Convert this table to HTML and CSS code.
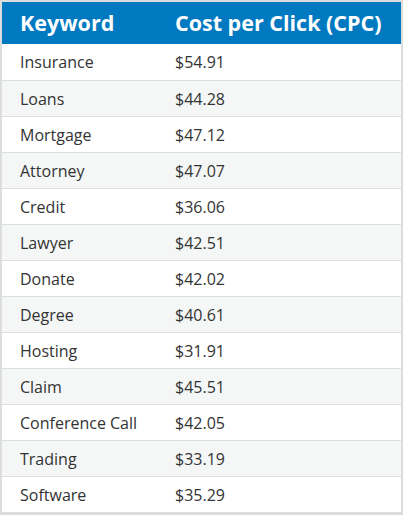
FILE: index.html
```html
<!DOCTYPE html>
<html>
<head>
<meta charset="utf-8">
<link rel="stylesheet" href="styles.css">
</head>
<body>
<table class="cpc">
  <thead>
    <tr><th class="kw">Keyword</th><th>Cost per Click (CPC)</th></tr>
  </thead>
  <tbody>
    <tr><td class="kw">Insurance</td><td>$54.91</td></tr>
    <tr><td class="kw">Loans</td><td>$44.28</td></tr>
    <tr><td class="kw">Mortgage</td><td>$47.12</td></tr>
    <tr><td class="kw">Attorney</td><td>$47.07</td></tr>
    <tr><td class="kw">Credit</td><td>$36.06</td></tr>
    <tr><td class="kw">Lawyer</td><td>$42.51</td></tr>
    <tr><td class="kw">Donate</td><td>$42.02</td></tr>
    <tr><td class="kw">Degree</td><td>$40.61</td></tr>
    <tr><td class="kw">Hosting</td><td>$31.91</td></tr>
    <tr><td class="kw">Claim</td><td>$45.51</td></tr>
    <tr><td class="kw">Conference Call</td><td>$42.05</td></tr>
    <tr><td class="kw">Trading</td><td>$33.19</td></tr>
    <tr><td class="kw">Software</td><td>$35.29</td></tr>
  </tbody>
</table>
</body>
</html>
```
FILE: styles.css
```css
html, body {
  margin: 0;
  padding: 0;
  background: #ffffff;
}
.cpc {
  width: 403px;
  border-collapse: separate;
  border-spacing: 0;
  border: 2px solid #dddddd;
  border-bottom-width: 3px;
  font-family: "Open Sans", "Noto Sans", sans-serif;
  box-sizing: border-box;
  table-layout: fixed;
}
.cpc th, .cpc td {
  text-align: left;
  padding: 0 0 0 18px;
  box-sizing: border-box;
}
.cpc th {
  background: #0079c1;
  color: #ffffff;
  font-weight: 700;
  font-size: 21.5px;
  height: 42px;
  line-height: 42px;
}
.cpc th.kw, .cpc td.kw {
  width: 155px;
}
.cpc td {
  height: 36px;
  font-size: 16px;
  color: #333333;
  border-top: 1px solid #dcdfe1;
  line-height: 34px;
}
.cpc tbody tr:first-child td {
  border-top: none;
  height: 36px;
}
.cpc tbody tr:nth-child(even) td {
  background: #f5f7f7;
}
```
